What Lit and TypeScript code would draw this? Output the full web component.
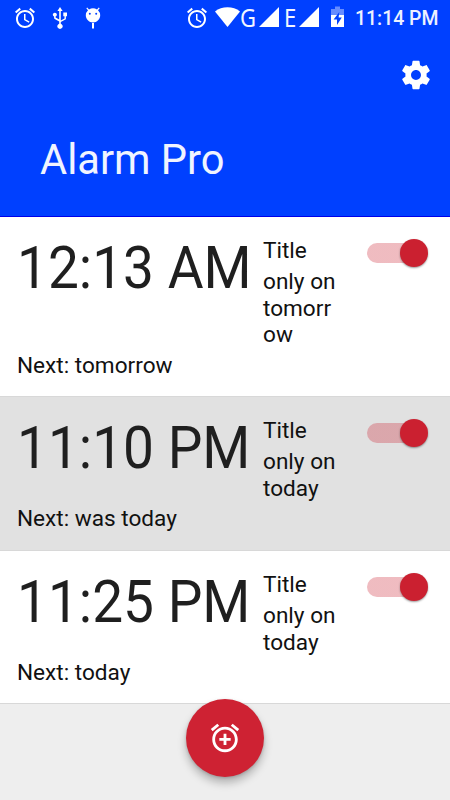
import { LitElement, html, css, svg } from "lit";
import { customElement } from "lit/decorators.js";

const alarmShape = svg`<path d="M22 5.72l-4.6-3.86-1.29 1.53 4.6 3.86L22 5.72zM7.88 3.39L6.6 1.86 2 5.71l1.29 1.53 4.59-3.85zM12.5 8H11v6l4.75 2.85.75-1.23-4-2.37V8zM12 4c-4.97 0-9 4.03-9 9s4.02 9 9 9c4.97 0 9-4.03 9-9s-4.03-9-9-9zm0 16c-3.87 0-7-3.13-7-7s3.13-7 7-7 7 3.13 7 7-3.13 7-7 7z"/>`;

@customElement("status-bar")
class StatusBar extends LitElement {
  static styles = css`
    :host { display: flex; justify-content: space-between; height: 36px; padding: 0 10px 0 13px; color: #fff; }
    .group { display: flex; align-items: flex-start; }
    svg { display: block; fill: #fff; flex: none; }
    .alarm { margin-top: 6px; }
    .usb { margin: 7px 0 0 15px; }
    .bug { margin: 7px 0 0 17px; }
    .wifi { margin: 7px 0 0 6px; }
    .net { font: 400 25px/34px "Noto Sans", "Open Sans", sans-serif; color: #f2f5ff; height: 36px; transform-origin: 0 0; transform: scaleX(.88); }
    .g { width: 19px; }
    .e { width: 15px; margin-left: 5px; }
    .bars { margin-top: 7px; }
    .battery { margin: 6px 0 0 12px; }
    .clock { font: 500 19.5px/38px Roboto, sans-serif; margin-left: 11px; white-space: nowrap; width: 85px; color: #edf1ff; transform-origin: 0 0; transform: scaleX(.995); }
  `;
  render() {
    const alarm = html`<svg class="alarm" width="24" height="24" viewBox="0 0 24 24">${alarmShape}</svg>`;
    const bars = html`<svg class="bars" width="20" height="20" viewBox="0 0 20 20"><path d="M0 20L20 0V20z"/></svg>`;
    return html`
      <div class="group">
        ${alarm}
        <svg class="usb" width="16" height="22" viewBox="0 0 16 22">
          <path d="M8 0l2.6 4H8.8v9.6l3.7-2V9.3h-1.2V5.6H15v3.7h-1.1v3L8.8 15v1.7a2.7 2.7 0 1 1-1.6 0v-2.3l-4.5-2.5c-.5-.3-.6-.7-.6-1.2V9.5a2 2 0 1 1 1.5 0v1.1l3.6 2V4H5.4z"/>
        </svg>
        <svg class="bug" width="16" height="22" viewBox="0 0 16 22">
          <path fill-rule="evenodd" d="M2.2.4L4 2.5A8 8 0 0 1 12 2.5L13.8.4l.9.8L13 3.3A7.2 7.2 0 0 1 15.2 8.3C15.2 12.3 12 15.5 8 15.5S.8 12.3.8 8.3A7.2 7.2 0 0 1 3 3.3L1.3 1.2zM4.8 5.8a1 1 0 1 0 0 2 1 1 0 0 0 0-2zM11.2 5.8a1 1 0 1 0 0 2 1 1 0 0 0 0-2z"/>
          <path d="M7 16h2v5.5H7z"/>
        </svg>
      </div>
      <div class="group">
        ${alarm}
        <svg class="wifi" width="25" height="20" viewBox="0 0 25 20"><path d="M0 4.5C3.5 1.7 7.8.3 12.5.3S21.5 1.7 25 4.5L12.5 20z"/></svg>
        <span class="net g">G</span>${bars}
        <span class="net e">E</span>${bars}
        <svg class="battery" width="13" height="22" viewBox="0 0 13 22">
          <path fill-opacity=".4" d="M4 .5h5V3h4v6H0V3h4z"/>
          <path d="M0 9h13v12H0z"/>
          <path fill="#0040ff" d="M8.3 6L2.6 13.6H6V19l4.8-7.6H7.6z"/>
        </svg>
        <span class="clock">11:14 PM</span>
      </div>`;
  }
}

@customElement("alarm-row")
class AlarmRow extends LitElement {
  static properties = { time: {}, note: {}, next: {} };
  declare time: string;
  declare note: string;
  declare next: string;
  static styles = css`
    :host { display: block; box-sizing: border-box; padding: 20px 22px 0 17px; color: #111; font: 22.6px/26.3px Roboto, sans-serif; }
    .top { display: flex; align-items: flex-start; }
    .time { width: 246px; flex: none; }
    .time span { display: block; width: max-content; font-size: 60px; line-height: 62px; color: #1f1f1f; white-space: nowrap; transform-origin: 0 0; transform: scaleX(.917); }
    .label { width: 74px; padding-top: 1px; overflow-wrap: anywhere; }
    .title { margin-bottom: 5px; }
    .next { margin-top: 4.5px; }
    .switch { margin: 6px 0 0 auto; width: 61px; height: 20px; display: flex; align-items: center; justify-content: flex-end; border-radius: 10px; background: linear-gradient(90deg, rgba(203, 32, 48, .3) 52px, transparent 52px); }
    .knob { width: 28px; height: 28px; flex: none; border-radius: 50%; background: #cb2030; box-shadow: 0 1px 2px rgba(0, 0, 0, .4); }
  `;
  render() {
    return html`
      <div class="top">
        <div class="time"><span>${this.time}</span></div>
        <div class="label"><div class="title">Title</div><div>${this.note}</div></div>
        <div class="switch"><div class="knob"></div></div>
      </div>
      <div class="next">Next: ${this.next}</div>`;
  }
}

@customElement("app-root")
class AppRoot extends LitElement {
  static styles = css`
    :host { display: flex; flex-direction: column; position: relative; width: 450px; height: 800px; overflow: hidden; background: #eee; }
    header { height: 217px; box-sizing: border-box; background: #0040ff; border-bottom: 1px solid #0000e8; display: flex; flex-direction: column; flex: none; }
    .gear { align-self: flex-end; margin: 22px 17px 0 0; fill: #fff; display: block; }
    h1 { margin: 42px 0 0 40px; font: 400 42.7px/50px Roboto, sans-serif; color: #f0f4ff; transform-origin: 0 0; transform: scaleX(.975); }
    alarm-row { flex: none; background: #fff; border-bottom: 1px solid #d8d8d8; }
    .first { height: 180px; }
    .second { height: 154px; background: #e1e1e1; }
    .third { height: 153px; }
    .fab { position: absolute; left: 186px; top: 699px; width: 78px; height: 78px; border-radius: 50%; background: #ce2233; display: grid; place-items: center; box-shadow: 0 6px 9px rgba(0, 0, 0, .25), 0 1px 3px rgba(0, 0, 0, .16); }
    .fab svg { fill: #fff; display: block; }
  `;
  render() {
    return html`
      <header>
        <status-bar></status-bar>
        <svg class="gear" width="34" height="34" viewBox="0 0 24 24"><path d="M19.43 12.98c.04-.32.07-.64.07-.98s-.03-.66-.07-.98l2.11-1.65c.19-.15.24-.42.12-.64l-2-3.46c-.12-.22-.39-.3-.61-.22l-2.49 1c-.52-.4-1.08-.73-1.69-.98l-.38-2.65C14.46 2.18 14.25 2 14 2h-4c-.25 0-.46.18-.49.42l-.38 2.65c-.61.25-1.17.59-1.69.98l-2.49-1c-.23-.09-.49 0-.61.22l-2 3.46c-.13.22-.07.49.12.64l2.11 1.65c-.04.32-.07.65-.07.98s.03.66.07.98l-2.11 1.65c-.19.15-.24.42-.12.64l2 3.46c.12.22.39.3.61.22l2.49-1c.52.4 1.08.73 1.69.98l.38 2.65c.03.24.24.42.49.42h4c.25 0 .46-.18.49-.42l.38-2.65c.61-.25 1.17-.59 1.69-.98l2.49 1c.23.09.49 0 .61-.22l2-3.46c.12-.22.07-.49-.12-.64l-2.11-1.65zM12 15.5c-1.93 0-3.5-1.57-3.5-3.5s1.57-3.5 3.5-3.5 3.5 1.57 3.5 3.5-1.57 3.5-3.5 3.5z"/></svg>
        <h1>Alarm Pro</h1>
      </header>
      <alarm-row class="first" time="12:13 AM" note="only on tomorrow" next="tomorrow"></alarm-row>
      <alarm-row class="second" time="11:10 PM" note="only on today" next="was today"></alarm-row>
      <alarm-row class="third" time="11:25 PM" note="only on today" next="today"></alarm-row>
      <div class="fab">
        <svg width="34" height="34" viewBox="0 0 24 24"><path d="M7.88 3.39L6.6 1.86 2 5.71l1.29 1.53 4.59-3.85zM22 5.72l-4.6-3.86-1.29 1.53 4.6 3.86L22 5.72zM12 4c-4.97 0-9 4.03-9 9s4.02 9 9 9c4.97 0 9-4.03 9-9s-4.03-9-9-9zm0 16c-3.87 0-7-3.13-7-7s3.13-7 7-7 7 3.13 7 7-3.13 7-7 7zm1-11h-2v3H8v2h3v3h2v-3h3v-2h-3V9z"/></svg>
      </div>`;
  }
}
